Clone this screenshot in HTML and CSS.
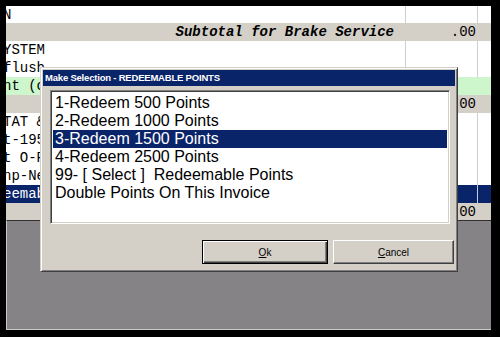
FILE: index.html
```html
<!DOCTYPE html>
<html lang="en">
<head>
    <meta charset="UTF-8">
    <meta name="viewport" content="width=device-width, initial-scale=1.0">
    <title>Make Selection</title>
    <link rel="stylesheet" href="styles.css">
</head>
<body>
    <div class="screen">
        <div class="row first"><span class="cell txt">N</span><span class="cell"></span><span class="cell"></span></div>
        <div class="row grey"><span class="cell sub">Subtotal for Brake Service</span><span class="cell amt">.00</span><span class="cell"></span></div>
        <div class="row"><span class="cell txt">YSTEM</span><span class="cell"></span><span class="cell"></span></div>
        <div class="row"><span class="cell txt">flush</span><span class="cell"></span><span class="cell"></span></div>
        <div class="row green"><span class="cell txt">nt (c</span><span class="cell"></span><span class="cell"></span></div>
        <div class="row grey"><span class="cell"></span><span class="cell amt">.00</span><span class="cell"></span></div>
        <div class="row"><span class="cell txt">TAT &amp;</span><span class="cell"></span><span class="cell"></span></div>
        <div class="row"><span class="cell txt">t-195</span><span class="cell"></span><span class="cell"></span></div>
        <div class="row"><span class="cell txt">t O-P</span><span class="cell"></span><span class="cell"></span></div>
        <div class="row"><span class="cell txt">np-Ne</span><span class="cell"></span><span class="cell"></span></div>
        <div class="row blue"><span class="cell txt">eemab</span><span class="cell"></span><span class="cell"></span></div>
        <div class="row grey last"><span class="cell"></span><span class="cell amt">.00</span><span class="cell"></span></div>
        <div class="desk"></div>

        <div class="dialog">
            <div class="titlebar">Make Selection - REDEEMABLE POINTS</div>
            <div class="dlg-body">
                <div class="listbox">
                    <div class="item">1-Redeem 500 Points</div>
                    <div class="item">2-Redeem 1000 Points</div>
                    <div class="item selected">3-Redeem 1500 Points</div>
                    <div class="item">4-Redeem 2500 Points</div>
                    <div class="item">99- [ Select ]  Redeemable Points</div>
                    <div class="item">Double Points On This Invoice</div>
                </div>
                <div class="buttons">
                    <button class="btn default"><u>O</u>k</button>
                    <button class="btn cancel"><u>C</u>ancel</button>
                </div>
            </div>
        </div>
    </div>
</body>
</html>
```

FILE: styles.css
```css
body{
    margin: 0;
    background: #000;
    width: 500px;
    height: 337px;
    overflow: hidden;
}
.screen{
    position: relative;
    margin: 6px 0 0 6px;
    width: 485px;
    height: 324px;
    background: #fff;
    display: flex;
    flex-direction: column;
    overflow: hidden;
    font-family: "Liberation Mono", "Courier New", monospace;
    font-size: 14px;
    color: #000;
}
.row{
    display: grid;
    grid-template-columns: 400px 72px 1fr;
    height: 18px;
    flex: none;
    background: #fff;
}
.row.first{ height: 17px; }
.row.last{ height: 17px; }
.row.grey{ background: #d4d0c8; }
.row.green{ background: #cdf6cd; }
.row.blue{ background: #0a246a; color: #fff; }

.cell{
    overflow: hidden;
    white-space: nowrap;
    line-height: 18px;
    border-right: 1px solid #cfcfcf;
}
.grey .cell, .green .cell{ border-right-color: transparent; }
.blue .cell{ border-right-color: #c8cce0; }
.cell:last-child{ border-right: none; }
.txt{ text-indent: -3px; }
.sub{
    text-align: right;
    padding-right: 11px;
    font-weight: bold;
    font-style: italic;
}
.amt{
    text-align: right;
    padding-right: 1px;
}
.desk{
    flex: 1;
    background: #858385;
    border-top: 1px solid #303030;
    border-left: 1px solid #c8c8c8;
    border-bottom: 1px solid #c8c8c8;
}

/* dialog window */
.dialog{
    position: absolute;
    left: 34px;
    top: 61px;
    width: 418px;
    height: 205px;
    box-sizing: border-box;
    background: #d4d0c8;
    border: 1px solid;
    border-color: #d4d0c8 #404040 #404040 #d4d0c8;
    box-shadow: inset 1px 1px 0 #fff, inset -1px -1px 0 #808080;
    padding: 2px;
    display: flex;
    flex-direction: column;
}
.titlebar{
    height: 16px;
    background: #0a246a;
    color: #fff;
    font-family: "Liberation Sans", Arial, sans-serif;
    font-weight: bold;
    font-size: 9.5px;
    letter-spacing: -0.2px;
    line-height: 16px;
    padding-left: 2px;
    white-space: nowrap;
}
.dlg-body{
    flex: 1;
    display: flex;
    flex-direction: column;
    padding: 4px 1px 5px 7px;
}
.listbox{
    width: 400px;
    height: 134px;
    box-sizing: border-box;
    background: #fff;
    border: 1px solid;
    border-color: #808080 #fff #fff #808080;
    box-shadow: inset 1px 1px 0 #404040, inset -1px -1px 0 #d4d0c8;
    padding: 3px 2px;
    font-family: "Liberation Sans", Arial, sans-serif;
    font-size: 16px;
}
.item{
    height: 18px;
    line-height: 18px;
    padding-left: 2px;
    white-space: pre;
}
.item.selected{
    background: #0a246a;
    color: #fff;
}
.buttons{
    margin-top: auto;
    display: flex;
    justify-content: flex-end;
    gap: 5px;
}
.btn{
    height: 24px;
    box-sizing: border-box;
    background: #d4d0c8;
    font-family: "Liberation Sans", Arial, sans-serif;
    font-size: 10px;
    color: #000;
    padding: 0;
    border: 1px solid;
    border-color: #fff #404040 #404040 #fff;
    box-shadow: inset -1px -1px 0 #808080;
    border-radius: 0;
}
.btn.default{
    width: 126px;
    border: 1px solid #000;
    box-shadow: inset 1px 1px 0 #fff, inset -1px -1px 0 #404040, inset -2px -2px 0 #808080;
}
.btn.cancel{
    width: 121px;
}
```
